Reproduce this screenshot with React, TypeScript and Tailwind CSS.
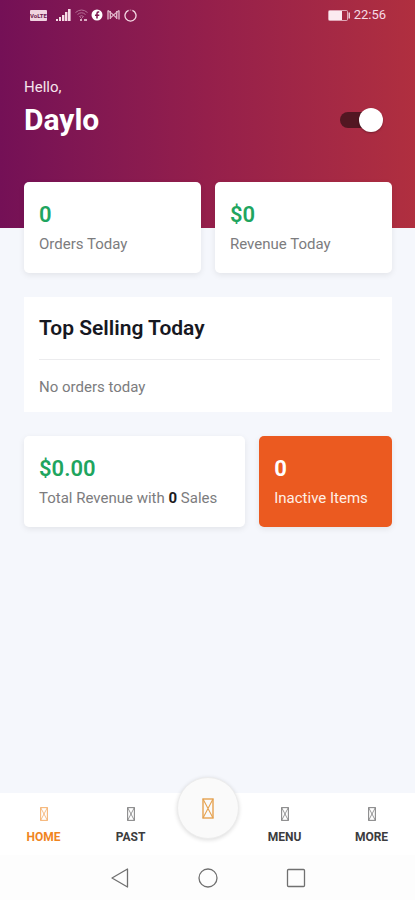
import { useState } from 'react';
import type { ReactNode } from 'react';

const StatusBar = () => (
  <div className="flex h-[30px] items-center justify-between pr-[29px] pl-[30px] text-[#f6dbe6]">
    <div className="flex items-center">
      <span className="flex h-[11px] w-[17px] items-center justify-center rounded-[1px] bg-[#f0d3e0] text-[6px] font-bold text-[#6b1a4c]">
        VoLTE
      </span>
      <svg className="ml-[9px] h-3 w-[15px]" viewBox="0 0 15 12" fill="currentColor">
        <rect x="0" y="10" width="2" height="2" />
        <rect x="3" y="8" width="2" height="4" />
        <rect x="6" y="6" width="2.4" height="6" />
        <rect x="9" y="3" width="2.4" height="9" />
        <rect x="12" y="0" width="2.6" height="12" />
      </svg>
      <svg className="ml-1 h-3 w-[14px]" viewBox="0 0 14 12" fill="none" stroke="currentColor">
        <g opacity="0.45">
          <path d="M0.5 3.5Q6.5 -1.5 12.5 3.5" />
          <path d="M2.5 5.5Q6.5 2 10.5 5.5" />
          <path d="M4.5 7.5Q6.5 5.8 8.5 7.5L6.5 9.5Z" />
        </g>
        <path d="M5 11h2M9 11h3" strokeWidth="1.6" />
      </svg>
      <svg className="ml-[2px] h-3 w-3" viewBox="0 0 12 12">
        <circle cx="6" cy="6" r="5.5" fill="#fff" />
        <path d="M8.2 3H7.2Q6 3 6 4.4V9.5M4 6.2H8.3" fill="none" stroke="#7d184f" strokeWidth="1.5" />
      </svg>
      <svg className="ml-1 h-3 w-[13px]" viewBox="0 0 13 12" fill="none" stroke="currentColor" opacity="0.8">
        <path d="M1 1.5V10.5M3.3 2V10M9.7 2V10M12 1.5V10.5" strokeWidth="1.4" />
        <path d="M1 1.5L6.5 6L12 1.5M3.3 9L6.5 6L9.7 9" strokeWidth="1.2" />
      </svg>
      <svg className="ml-1 h-[13px] w-[13px]" viewBox="0 0 13 13" fill="none" stroke="currentColor">
        <path d="M8.4 1.4A5.5 5.5 0 1 1 4.6 1.4" strokeWidth="1.3" />
        <path d="M5.6 1.1H7.4" strokeWidth="1" opacity="0.5" />
      </svg>
    </div>
    <div className="flex items-center gap-1">
      <svg className="h-[11px] w-[22px]" viewBox="0 0 22 11" fill="none" stroke="currentColor">
        <rect x="0.5" y="0.5" width="19" height="10" rx="1" opacity="0.7" />
        <rect x="1" y="1" width="13" height="9" fill="#fbeaf0" stroke="none" />
        <path d="M21.2 2.5V8.5" strokeWidth="1.4" />
      </svg>
      <span className="text-[13px]">22:56</span>
    </div>
  </div>
);

interface StatCardProps {
  value: string;
  children: ReactNode;
  highlight?: boolean;
}

const StatCard = ({ value, children, highlight = false }: StatCardProps) => (
  <div
    className={`rounded-[5px] px-[15px] pt-[19px] pb-[18px] shadow-[0_2px_6px_rgba(0,0,0,0.08)] ${
      highlight ? 'bg-[#eb5a20] text-[#ffefe6]' : 'bg-white text-[#7c7c7e]'
    }`}
  >
    <p
      className={`text-[22px] leading-7 ${
        highlight ? 'font-bold text-white' : 'font-semibold text-[#1fa55f]'
      }`}
    >
      {value}
    </p>
    <p className="mt-1 text-[15px] leading-[22px] whitespace-nowrap">{children}</p>
  </div>
);

const GlyphIcon = ({ className }: { className: string }) => (
  <svg className={className} viewBox="0 0 12 21" fill="none" stroke="currentColor" aria-hidden="true">
    <rect x="1" y="1" width="10" height="19" strokeWidth="1.4" />
    <path d="M1 1L11 20M11 1L1 20" strokeWidth="1.1" />
  </svg>
);

interface TabProps {
  label: string;
  active?: boolean;
  onClick: () => void;
}

const Tab = ({ label, active = false, onClick }: TabProps) => (
  <button
    type="button"
    onClick={onClick}
    className={`flex flex-1 flex-col items-center pt-[14px] text-xs leading-4 font-bold ${
      active ? 'text-[#f0851f]' : 'text-[#3c3c3e]'
    }`}
  >
    <GlyphIcon className="mb-2 h-[14px] w-2 opacity-70" />
    {label}
  </button>
);

const App = () => {
  const [isOpen, setIsOpen] = useState(true);
  const [tab, setTab] = useState('HOME');

  return (
    <div className="flex min-h-screen flex-col bg-[#f5f7fc] font-[Roboto,sans-serif]">
      <header className="bg-linear-to-r from-[#741056] via-[#951f4b] via-50% to-[#b02f3f] pb-[90px]">
        <StatusBar />
        <div className="flex items-end justify-between pt-[47px] pr-8 pl-6 text-white">
          <div>
            <p className="text-[15px] leading-5 text-[#f6e4ec]">Hello,</p>
            <h1 className="mt-[5px] text-[30px] leading-9 font-bold">Daylo</h1>
          </div>
          {/* track is ::before, thumb is ::after */}
          <input
            type="checkbox"
            role="switch"
            aria-label="Store open"
            checked={isOpen}
            onChange={(e) => setIsOpen(e.target.checked)}
            className="relative mb-[6px] flex h-6 w-[43px] appearance-none items-center before:absolute before:inset-x-0 before:inset-y-1 before:rounded-full before:bg-[#521722] after:relative after:h-6 after:w-6 after:rounded-full after:bg-white after:shadow-[0_1px_2px_rgba(0,0,0,0.3)] checked:before:right-1 checked:after:ml-auto"
          />
        </div>
      </header>

      <main className="-mt-[46px] flex flex-1 flex-col gap-6 pr-[23px] pl-6">
        <section className="grid grid-cols-2 gap-[14px]">
          <StatCard value="0">Orders Today</StatCard>
          <StatCard value="$0">Revenue Today</StatCard>
        </section>

        <section className="bg-white px-[15px] pt-[17px] pb-[14px]">
          <h2 className="text-[21px] leading-7 font-semibold text-[#17181f]">Top Selling Today</h2>
          <hr className="mt-[17px] mb-4 -mr-[3px] border-[#ececee]" />
          <p className="text-[15px] leading-[22px] text-[#7c7c7e]">No orders today</p>
        </section>

        <section className="grid grid-cols-[5fr_3fr] gap-[14px]">
          <StatCard value="$0.00">
            Total Revenue with <b className="font-bold text-[#1b1b1d]">0</b> Sales
          </StatCard>
          <StatCard value="0" highlight>
            Inactive Items
          </StatCard>
        </section>
      </main>

      <nav className="flex h-[62px] bg-white">
        <Tab label="HOME" active={tab === 'HOME'} onClick={() => setTab('HOME')} />
        <Tab label="PAST" active={tab === 'PAST'} onClick={() => setTab('PAST')} />
        <div className="flex w-[67px] justify-center">
          <button
            type="button"
            aria-label="Current orders"
            className="-mt-4 flex h-[62px] w-[62px] items-center justify-center rounded-full border border-[#ececec] bg-[#fafafa] text-[#e5a250] shadow-[0_1px_4px_rgba(0,0,0,0.14)]"
          >
            <GlyphIcon className="h-[21px] w-3" />
          </button>
        </div>
        <Tab label="MENU" active={tab === 'MENU'} onClick={() => setTab('MENU')} />
        <Tab label="MORE" active={tab === 'MORE'} onClick={() => setTab('MORE')} />
      </nav>

      <footer className="flex h-[45px] items-center justify-center bg-[#fdfdfd] text-[#707070]">
        <button type="button" aria-label="Back" className="flex w-[88px] justify-center">
          <svg className="h-5 w-5" viewBox="0 0 20 20" fill="none" stroke="currentColor" strokeWidth="1.3">
            <path d="M17.5 1V19L2 10Z" strokeLinejoin="round" />
          </svg>
        </button>
        <button type="button" aria-label="Home" className="flex w-[88px] justify-center">
          <svg className="h-5 w-5" viewBox="0 0 20 20" fill="none" stroke="currentColor" strokeWidth="1.3">
            <circle cx="10" cy="10" r="9" />
          </svg>
        </button>
        <button type="button" aria-label="Recent apps" className="flex w-[88px] justify-center">
          <svg className="h-5 w-5" viewBox="0 0 20 20" fill="none" stroke="currentColor" strokeWidth="1.3">
            <rect x="1.5" y="1.5" width="17" height="17" rx="1" />
          </svg>
        </button>
      </footer>
    </div>
  );
};

export default App;
